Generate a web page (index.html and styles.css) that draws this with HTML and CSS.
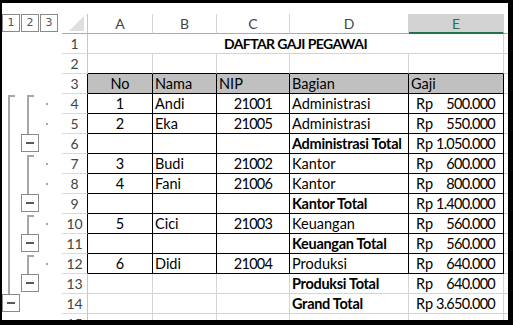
FILE: index.html
```html
<!DOCTYPE html>
<html>
<head>
<meta charset="utf-8">
<link rel="stylesheet" href="styles.css">
</head>
<body>
<div class="frame">
  <div class="row hdr">
    <div class="gut levels">
      <span class="lvl">1</span><span class="lvl">2</span><span class="lvl">3</span>
    </div>
    <div class="rh corner"><span class="tri"></span></div>
    <div class="c a">A</div>
    <div class="c b">B</div>
    <div class="c cc">C</div>
    <div class="c d">D</div>
    <div class="c e sel">E</div>
    <div class="c f"></div>
  </div>

  <div class="row">
    <div class="gut"></div>
    <div class="rh">1</div>
    <div class="c title">DAFTAR GAJI PEGAWAI</div>
    <div class="c f"></div>
  </div>

  <div class="row above">
    <div class="gut"></div>
    <div class="rh">2</div>
    <div class="c a"></div><div class="c b"></div><div class="c cc"></div><div class="c d"></div><div class="c e"></div>
    <div class="c f"></div>
  </div>

  <div class="row tb th">
    <div class="gut"></div>
    <div class="rh">3</div>
    <div class="c a ctr">No</div>
    <div class="c b">Nama</div>
    <div class="c cc">NIP</div>
    <div class="c d">Bagian</div>
    <div class="c e">Gaji</div>
    <div class="c f"></div>
  </div>

  <div class="row tb">
    <div class="gut"><span class="slot"><span class="vl start"></span></span><span class="slot"><span class="vl start"></span></span><span class="slot"><span class="dot"></span></span></div>
    <div class="rh">4</div>
    <div class="c a ctr">1</div>
    <div class="c b">Andi</div>
    <div class="c cc ctr num">21001</div>
    <div class="c d">Administrasi</div>
    <div class="c e acc"><span>Rp</span><span class="num">500.000</span></div>
    <div class="c f"></div>
  </div>

  <div class="row tb">
    <div class="gut"><span class="slot"><span class="vl"></span></span><span class="slot"><span class="vl"></span></span><span class="slot"><span class="dot"></span></span></div>
    <div class="rh">5</div>
    <div class="c a ctr">2</div>
    <div class="c b">Eka</div>
    <div class="c cc ctr num">21005</div>
    <div class="c d">Administrasi</div>
    <div class="c e acc"><span>Rp</span><span class="num">550.000</span></div>
    <div class="c f"></div>
  </div>

  <div class="row tb">
    <div class="gut"><span class="slot"><span class="vl"></span></span><span class="slot"><span class="btn"></span></span><span class="slot"></span></div>
    <div class="rh">6</div>
    <div class="c a"></div>
    <div class="c b"></div>
    <div class="c cc"></div>
    <div class="c d bold">Administrasi Total</div>
    <div class="c e acc"><span>Rp</span><span class="num">1.050.000</span></div>
    <div class="c f"></div>
  </div>

  <div class="row tb">
    <div class="gut"><span class="slot"><span class="vl"></span></span><span class="slot"><span class="vl start"></span></span><span class="slot"><span class="dot"></span></span></div>
    <div class="rh">7</div>
    <div class="c a ctr">3</div>
    <div class="c b">Budi</div>
    <div class="c cc ctr num">21002</div>
    <div class="c d">Kantor</div>
    <div class="c e acc"><span>Rp</span><span class="num">600.000</span></div>
    <div class="c f"></div>
  </div>

  <div class="row tb">
    <div class="gut"><span class="slot"><span class="vl"></span></span><span class="slot"><span class="vl"></span></span><span class="slot"><span class="dot"></span></span></div>
    <div class="rh">8</div>
    <div class="c a ctr">4</div>
    <div class="c b">Fani</div>
    <div class="c cc ctr num">21006</div>
    <div class="c d">Kantor</div>
    <div class="c e acc"><span>Rp</span><span class="num">800.000</span></div>
    <div class="c f"></div>
  </div>

  <div class="row tb">
    <div class="gut"><span class="slot"><span class="vl"></span></span><span class="slot"><span class="btn"></span></span><span class="slot"></span></div>
    <div class="rh">9</div>
    <div class="c a"></div>
    <div class="c b"></div>
    <div class="c cc"></div>
    <div class="c d bold">Kantor Total</div>
    <div class="c e acc"><span>Rp</span><span class="num">1.400.000</span></div>
    <div class="c f"></div>
  </div>

  <div class="row tb">
    <div class="gut"><span class="slot"><span class="vl"></span></span><span class="slot"><span class="vl start"></span></span><span class="slot"><span class="dot"></span></span></div>
    <div class="rh">10</div>
    <div class="c a ctr">5</div>
    <div class="c b">Cici</div>
    <div class="c cc ctr num">21003</div>
    <div class="c d">Keuangan</div>
    <div class="c e acc"><span>Rp</span><span class="num">560.000</span></div>
    <div class="c f"></div>
  </div>

  <div class="row tb">
    <div class="gut"><span class="slot"><span class="vl"></span></span><span class="slot"><span class="btn"></span></span><span class="slot"></span></div>
    <div class="rh">11</div>
    <div class="c a"></div>
    <div class="c b"></div>
    <div class="c cc"></div>
    <div class="c d bold">Keuangan Total</div>
    <div class="c e acc"><span>Rp</span><span class="num">560.000</span></div>
    <div class="c f"></div>
  </div>

  <div class="row tb">
    <div class="gut"><span class="slot"><span class="vl"></span></span><span class="slot"><span class="vl start"></span></span><span class="slot"><span class="dot"></span></span></div>
    <div class="rh">12</div>
    <div class="c a ctr">6</div>
    <div class="c b">Didi</div>
    <div class="c cc ctr num">21004</div>
    <div class="c d">Produksi</div>
    <div class="c e acc"><span>Rp</span><span class="num">640.000</span></div>
    <div class="c f"></div>
  </div>

  <div class="row">
    <div class="gut"><span class="slot"><span class="vl"></span></span><span class="slot"><span class="btn"></span></span><span class="slot"></span></div>
    <div class="rh">13</div>
    <div class="c a"></div>
    <div class="c b"></div>
    <div class="c cc"></div>
    <div class="c d bold">Produksi Total</div>
    <div class="c e acc"><span>Rp</span><span class="num">640.000</span></div>
    <div class="c f"></div>
  </div>

  <div class="row">
    <div class="gut"><span class="slot"><span class="btn"></span></span><span class="slot"></span><span class="slot"></span></div>
    <div class="rh">14</div>
    <div class="c a"></div>
    <div class="c b"></div>
    <div class="c cc"></div>
    <div class="c d bold">Grand Total</div>
    <div class="c e acc"><span>Rp</span><span class="num">3.650.000</span></div>
    <div class="c f"></div>
  </div>

  <div class="row">
    <div class="gut"></div>
    <div class="rh">15</div>
    <div class="c a"></div>
    <div class="c b"></div>
    <div class="c cc"></div>
    <div class="c d"></div>
    <div class="c e"></div>
    <div class="c f"></div>
  </div>
</div>
</body>
</html>
```

FILE: styles.css
```css
html, body {
  margin: 0;
  padding: 0;
  background: #000;
}
.frame {
  margin: 3px 5px 0 2px;
  width: 506px;
  height: 317px;
  background: #fff;
  padding-top: 11px;
  box-sizing: border-box;
  overflow: hidden;
  font-family: Lato, "Liberation Sans", sans-serif;
  font-size: 14.5px;
  color: #000;
}
.row {
  display: flex;
  height: 20px;
}
.gut {
  width: 60px;
  flex: none;
  display: flex;
  height: 20px;
}
.levels {
  height: 18px;
  gap: 1px;
}
.lvl {
  width: 18px;
  height: 18px;
  box-sizing: border-box;
  border: 1px solid #8a8a8a;
  font-family: "DejaVu Sans", sans-serif;
  font-size: 11px;
  line-height: 16px;
  text-align: center;
  color: #555;
}
.slot {
  width: 19px;
  flex: none;
  height: 20px;
}
.vl {
  display: block;
  margin-left: 6px;
  width: 0;
  height: 20px;
  border-left: 2px solid #a6a6a6;
}
.vl.start {
  margin-top: 1px;
  height: 19px;
  border-top: 2px solid #a6a6a6;
  box-sizing: border-box;
  width: 7px;
}
.dot {
  display: block;
  margin: 9px 0 0 6px;
  width: 2px;
  height: 2px;
  background: #a6a6a6;
}
.btn {
  display: flex;
  align-items: center;
  justify-content: center;
  width: 18px;
  height: 18px;
  box-sizing: border-box;
  border: 1px solid #8a8a8a;
  background: #fff;
}
.btn::before {
  content: "";
  width: 8px;
  height: 2px;
  background: #595959;
}
.rh {
  width: 26px;
  flex: none;
  box-sizing: border-box;
  border-right: 1px solid #c6c6c6;
  border-bottom: 1px solid #dadada;
  text-align: center;
  font-size: 14px;
  line-height: 20px;
  color: #444;
}
.c {
  flex: none;
  box-sizing: border-box;
  height: 20px;
  border-right: 1px solid #d4d4d4;
  border-bottom: 1px solid #d4d4d4;
  padding: 0 2px;
  line-height: 20px;
  white-space: nowrap;
  overflow: hidden;
}
.a { width: 65px; }
.b { width: 64px; }
.cc { width: 73px; }
.d { width: 119px; }
.e { width: 95px; }
.f { flex: 1; border-right: none; }
.title {
  width: 416px;
  text-align: center;
  font-weight: bold;
  font-size: 14px;
  letter-spacing: -0.6px;
}
.ctr { text-align: center; }
.num { letter-spacing: -0.75px; }
.bold {
  font-weight: bold;
  font-size: 14.5px;
  letter-spacing: -0.3px;
}
.acc {
  display: flex;
  justify-content: space-between;
  padding: 0 8px 0 7px;
}

/* header row */
.hdr .rh, .hdr .c {
  border-bottom: 1px solid #ababab;
  color: #444;
  text-align: center;
  font-size: 14px;
}
.hdr .c { border-right-color: #d4d4d4; }
.hdr .sel {
  background: #d2d2d2;
  color: #217346;
  border-bottom: 2px solid #217346;
}
.corner {
  display: flex;
  align-items: flex-end;
  justify-content: flex-end;
  padding: 0 3px 2px 0;
}
.tri {
  width: 0;
  height: 0;
  border-left: 15px solid transparent;
  border-bottom: 15px solid #dfdfdf;
}

/* bordered table */
.above .a, .above .b, .above .cc, .above .d, .above .e { border-bottom-color: #000; }
.tb .rh { border-right-color: #000; }
.tb .a, .tb .b, .tb .cc, .tb .d, .tb .e {
  border-right-color: #000;
  border-bottom-color: #000;
}
.th .a, .th .b, .th .cc, .th .d, .th .e { background: #c0c0c0; }
```
